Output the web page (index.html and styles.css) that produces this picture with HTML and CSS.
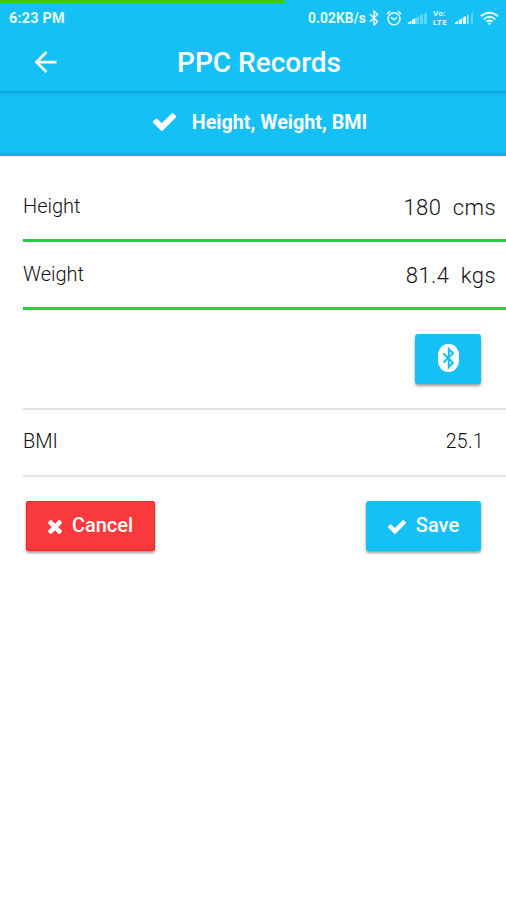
FILE: index.html
```html
<!DOCTYPE html>
<html lang="en">
<head>
<meta charset="utf-8">
<meta name="viewport" content="width=device-width, initial-scale=1">
<title>PPC Records</title>
<link rel="stylesheet" href="styles.css">
</head>
<body>
<svg class="defs" aria-hidden="true">
  <symbol id="check" viewBox="121 334 1550 1188"><path d="M1671 566q0 40-28 68l-724 724-136 136q-28 28-68 28t-68-28l-136-136-362-362q-28-28-28-68t28-68l136-136q28-28 68-28t68 28l294 295 656-657q28-28 68-28t68 28l136 136q28 28 28 68z"/></symbol>
</svg>
<header class="appbar">
  <div class="progress"></div>
  <div class="status">
    <span class="time">6:23 PM</span>
    <div class="indicators">
      <span class="speed">0.02KB/s</span>
      <svg class="bt" viewBox="0 0 10 16"><path d="M1 4.3 8.5 11.4 5 15V1l3.5 3.6L1 11.7"/></svg>
      <svg class="alarm" viewBox="0 0 16 16"><circle cx="8" cy="8.8" r="6"/><path d="M5 7.3 8 9.8l3-2.5M1 4 4 1.2M12 1.2 15 4"/></svg>
      <svg class="signal" viewBox="0 0 19 12"><path d="M0 12V10.5L3.5 8.5V12zM4 12V8L7.5 6v6z"/><path opacity=".35" d="M8 12V5.5L11 4v8zM11.8 12V3.5L15 2v10zM15.8 12V1.5L19 0v12z"/></svg>
      <span class="volte"><span>Vo:</span><span>LTE</span></span>
      <svg class="signal second" viewBox="0 0 19 12"><path d="M0 12V10.5L3.2 8.5V12zM4 12V8L7.2 6v6zM8 12V5.5L11 4v8z"/><path opacity=".7" d="M12 12V3.5L13.6 2v10z"/><path opacity=".35" d="M16 12V1.5L18 0v12z"/></svg>
      <svg class="wifi" viewBox="0 0 20 15"><path d="M1 5.2Q10-2.2 19 5.2M4 8.2Q10 3.2 16 8.2M6.8 11Q10 8.4 13.2 11"/><path class="dot" d="M8 12.2Q10 11 12 12.2L10 14.8z"/></svg>
    </div>
  </div>
  <div class="toolbar">
    <svg class="back" viewBox="4 4 16 16"><path d="M20 11H7.83l5.59-5.59L12 4l-8 8 8 8 1.41-1.41L7.83 13H20v-2z"/></svg>
    <h1>PPC Records</h1>
  </div>
</header>
<div class="tab">
  <svg class="tab-check"><use href="#check"/></svg>
  <span>Height, Weight, BMI</span>
</div>
<main>
  <div class="row measured"><span class="label">Height</span><span class="value">180&nbsp; cms</span></div>
  <div class="row measured"><span class="label">Weight</span><span class="value">81.4&nbsp; kgs</span></div>
  <div class="row device">
    <button class="btn bluetooth" aria-label="Bluetooth">
      <svg viewBox="0 0 21 28"><rect width="21" height="28" rx="10" ry="11"/><path class="rune" d="M5.5 9.5 15 18.7 10.8 23V5L15 9.3 5.5 18.5"/></svg>
    </button>
  </div>
  <div class="row bmi"><span class="label">BMI</span><span class="result">25.1</span></div>
  <div class="actions">
    <button class="btn cancel">
      <svg viewBox="302 366 1188 1188"><path d="M1490 1322q0 40-28 68l-136 136q-28 28-68 28t-68-28l-294-294-294 294q-28 28-68 28t-68-28l-136-136q-28-28-28-68t28-68l294-294-294-294q-28-28-28-68t28-68l136-136q28-28 68-28t68 28l294 294 294-294q28-28 68-28t68 28l136 136q28 28 28 68t-28 68l-294 294 294 294q28 28 28 68z"/></svg>
      <span>Cancel</span>
    </button>
    <button class="btn save">
      <svg><use href="#check"/></svg>
      <span>Save</span>
    </button>
  </div>
</main>
</body>
</html>
```
FILE: styles.css
```css
* { box-sizing: border-box; }
body {
  margin: 0;
  height: 900px;
  overflow: hidden;
  background: #fff;
  color: #222;
  font-family: Roboto, "Liberation Sans", sans-serif;
}
svg { display: block; flex: none; fill: currentColor; }
.defs { display: none; }

.appbar {
  height: 91px;
  background: #14c0f5;
  color: #fff;
}
.progress { width: 284px; height: 3px; background: #43c51b; }
.status {
  display: flex;
  justify-content: space-between;
  align-items: center;
  height: 30px;
  padding: 0 7px 0 9px;
  color: #e3faff;
  font-weight: 700;
}
.time { font-size: 14.5px; letter-spacing: .15px; }
.indicators { display: flex; align-items: center; }
.speed { font-size: 13.8px; letter-spacing: .05px; }
.bt { width: 10px; height: 16px; margin-left: 3px; fill: none; stroke: currentColor; stroke-width: 1.5; }
.alarm { width: 16px; height: 16px; margin-left: 7px; fill: none; stroke: currentColor; stroke-width: 1.6; }
.signal { width: 19px; height: 12px; margin-left: 6px; }
.second { margin-left: 6px; }
.volte {
  display: flex;
  flex-direction: column;
  width: 16px;
  margin-left: 6px;
  font-size: 8px;
  line-height: 9px;
  letter-spacing: .4px;
}
.volte span { height: 9px; }
.wifi { width: 19px; height: 15px; margin-left: 6px; fill: none; stroke: currentColor; stroke-width: 2; }
.wifi .dot { fill: currentColor; stroke: none; }

.toolbar {
  display: grid;
  grid-template-columns: 72px 1fr 60px;
  align-items: center;
  height: 58px;
}
.back { width: 23px; height: 22px; margin-left: 34px; }
h1 { margin: 2px 0 0; text-align: center; font-size: 28px; font-weight: 500; line-height: 34px; }

.tab {
  display: flex;
  align-items: center;
  justify-content: center;
  gap: 16px;
  height: 65px;
  padding: 0 0 3px 14px;
  background: linear-gradient(#0e9fd0, #11b2e6 2px, #14c0f5 5px, #14c0f5 61px, #0fb2e8 62px);
  color: #fff;
  font-size: 19.7px;
  font-weight: 700;
}
.tab-check { width: 23px; height: 18px; }

main { padding: 18px 0 0 23px; }
.row { display: flex; justify-content: space-between; }
.measured { height: 68px; border-bottom: 3px solid #25cf42; }
.label { font-size: 20px; line-height: 24px; padding-top: 20px; font-weight: 300; color: #111; }
.value { padding: 21px 10px 0 0; font-size: 22px; line-height: 26px; font-weight: 300; color: #111; letter-spacing: .4px; }
.device {
  justify-content: flex-end;
  height: 100px;
  padding: 24px 25px 0 0;
  border-bottom: 2px solid #e2e2e2;
}
.bmi { height: 67px; border-bottom: 2px solid #e4e4e4; }
.bmi .label { padding-top: 19px; }
.result { padding: 20px 22px 0 0; font-size: 19.5px; line-height: 24px; font-weight: 300; color: #111; letter-spacing: .3px; }

.btn {
  display: flex;
  align-items: center;
  justify-content: center;
  gap: 10px;
  height: 50px;
  padding: 0 0 2px;
  border: 0;
  border-radius: 3px;
  background: #14c0f5;
  color: #fff;
  font: 500 20px/24px Roboto, "Liberation Sans", sans-serif;
  box-shadow: 0 2px 3px rgba(0, 0, 0, .4);
}
.bluetooth { width: 66px; }
.bluetooth svg { width: 21px; height: 28px; }
.rune { fill: none; stroke: #14c0f5; stroke-width: 2; }
.actions {
  display: flex;
  justify-content: space-between;
  padding: 24px 25px 0 3px;
}
.cancel { width: 129px; background: #fa393c; box-shadow: 0 2px 3px rgba(0, 0, 0, .4), inset 0 0 0 1px #f02428; }
.cancel svg { width: 14px; height: 14px; margin-top: 3px; }
.save { width: 115px; }
.save svg { width: 18px; height: 14px; margin-top: 3px; }
```
